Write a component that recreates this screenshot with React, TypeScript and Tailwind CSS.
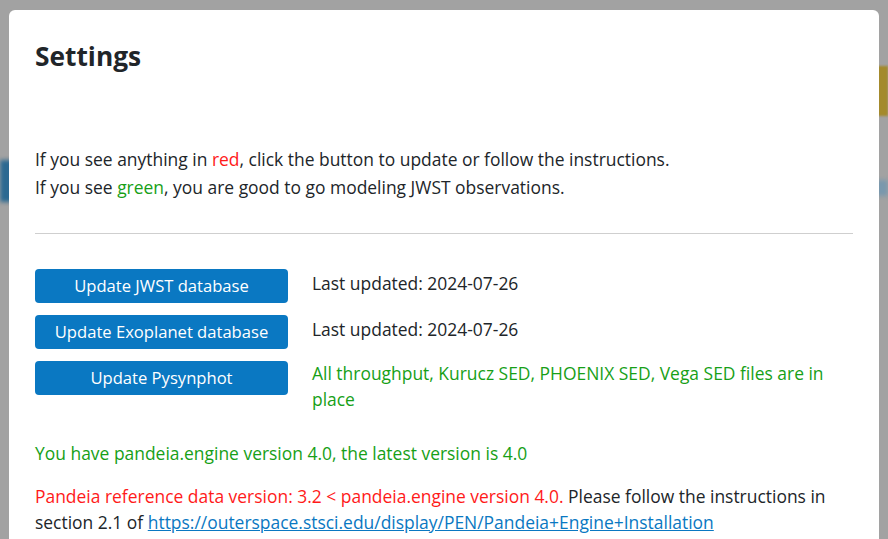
import React from 'react';

// ── Status rows ──

const ROWS = [
  { label: 'Update JWST database', status: 'Last updated: 2024-07-26', ok: false },
  { label: 'Update Exoplanet database', status: 'Last updated: 2024-07-26', ok: false },
  {
    label: 'Update Pysynphot',
    status: 'All throughput, Kurucz SED, PHOENIX SED, Vega SED files are in place',
    ok: true,
  },
];

export default function App() {
  return (
    <div
      className="relative h-[539px] w-[888px] overflow-hidden bg-[#a2a2a2] text-[17.45px] text-[#212529]"
      style={{ fontFamily: '"Open Sans", "Noto Sans", sans-serif' }}
    >
      {/* Blurred page behind the overlay */}
      <div className="absolute left-0 top-[160px] h-[42px] w-[20px] bg-[#2c6991] blur-[2px]" />
      <div className="absolute right-0 top-[66px] h-[50px] w-[20px] bg-[#a48a2c] blur-[1px]" />
      <div className="absolute right-0 top-[180px] h-[16px] w-[14px] bg-[#7a98ad] blur-[2px]" />

      {/* Modal */}
      <div className="absolute left-[9px] top-[10px] h-[560px] w-[870px] rounded-md bg-white px-[26px] pt-[28px]">
        <h2 className="text-[26.3px] font-bold leading-[36px]">Settings</h2>

        <div className="mt-[71px] leading-[28px]">
          <p>
            If you see anything in <span className="text-[#ff1a1a]">red</span>, click the button to
            update or follow the instructions.
          </p>
          <p>
            If you see <span className="text-[#17a017]">green</span>, you are good to go modeling JWST
            observations.
          </p>
        </div>

        <hr className="mt-[32px] border-t border-[#cfcfcf]" />

        <div className="mt-[35px] flex flex-col gap-[12px]">
          {ROWS.map((r) => (
            <div key={r.label} className="flex items-start gap-[24px]">
              <button className="h-[34px] w-[253px] shrink-0 rounded-[4px] bg-[#0a78c2] text-[16.6px] text-white">
                {r.label}
              </button>
              <div
                className={`leading-[26px] ${r.ok ? '-mt-[1px] text-[#17a017]' : 'pt-[1px]'}`}
              >
                {r.status}
              </div>
            </div>
          ))}
        </div>

        <p className="mt-[28px] leading-[26px] text-[#17a017]">
          You have pandeia.engine version 4.0, the latest version is 4.0
        </p>

        <p className="mt-[17px] leading-[26px]">
          <span className="text-[#ff1a1a]">
            Pandeia reference data version: 3.2 &lt; pandeia.engine version 4.0.
          </span>{' '}
          Please follow the instructions in section 2.1 of{' '}
          <a href="#" className="text-[#0a78c2] underline">
            https://outerspace.stsci.edu/display/PEN/Pandeia+Engine+Installation
          </a>
        </p>
      </div>
    </div>
  );
}
